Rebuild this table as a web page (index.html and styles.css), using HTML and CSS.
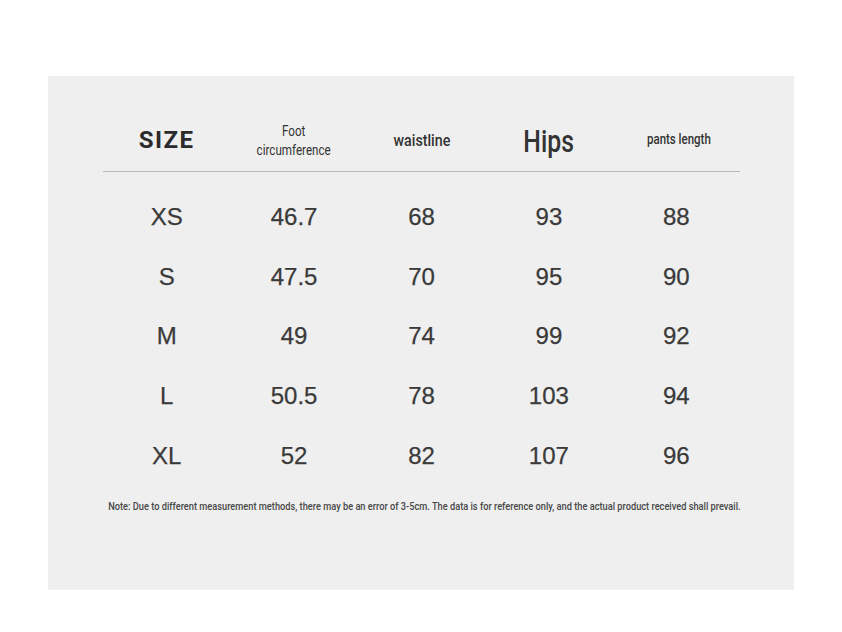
FILE: index.html
```html
<!DOCTYPE html>
<html>
<head>
<meta charset="utf-8">
<link rel="stylesheet" href="styles.css">
</head>
<body>
<div class="panel">
  <div class="table">
    <div class="row head">
      <div class="cell size">SIZE</div>
      <div class="cell"><span class="cond foot">Foot<br>circumference</span></div>
      <div class="cell"><span class="cond waist">waistline</span></div>
      <div class="cell"><span class="cond hips">Hips</span></div>
      <div class="cell"><span class="cond pants">pants length</span></div>
    </div>
    <div class="body">
      <div class="row data"><div class="cell">XS</div><div class="cell">46.7</div><div class="cell">68</div><div class="cell">93</div><div class="cell">88</div></div>
      <div class="row data"><div class="cell">S</div><div class="cell">47.5</div><div class="cell">70</div><div class="cell">95</div><div class="cell">90</div></div>
      <div class="row data"><div class="cell">M</div><div class="cell">49</div><div class="cell">74</div><div class="cell">99</div><div class="cell">92</div></div>
      <div class="row data"><div class="cell">L</div><div class="cell">50.5</div><div class="cell">78</div><div class="cell">103</div><div class="cell">94</div></div>
      <div class="row data"><div class="cell">XL</div><div class="cell">52</div><div class="cell">82</div><div class="cell">107</div><div class="cell">96</div></div>
    </div>
    <div class="note-wrap"><p class="note">Note: Due to different measurement methods, there may be an error of 3-5cm. The data is for reference only, and the actual product received shall prevail.</p></div>
  </div>
</div>
</body>
</html>
```
FILE: styles.css
```css
html, body {
  margin: 0;
  padding: 0;
  background: #ffffff;
}
.panel {
  margin: 76px 0 0 48px;
  width: 746px;
  height: 514px;
  box-sizing: border-box;
  padding: 33px 0 0 55px;
  background: #efefef;
}
.table {
  width: 637px;
}
.row {
  display: grid;
  grid-template-columns: repeat(5, 1fr);
  align-items: center;
  text-align: center;
}
.cell {
  display: flex;
  justify-content: center;
}
.head {
  height: 62px;
  border-bottom: 1px solid #b8b8b8;
  color: #333333;
}
.cond {
  display: inline-block;
  font-family: "Roboto", "Liberation Sans", sans-serif;
  white-space: nowrap;
  transform-origin: center center;
}
.size {
  font-family: "Roboto", "Liberation Sans", sans-serif;
  font-weight: 700;
  font-size: 24px;
  letter-spacing: 1.5px;
  color: #2b2b2b;
}
.foot {
  font-size: 14px;
  line-height: 19px;
  transform: scaleX(0.83);
  margin-top: 2px;
}
.waist {
  font-size: 16px;
  font-weight: 500;
  transform: scaleX(0.89);
}
.hips {
  font-size: 31px;
  font-weight: 500;
  transform: scaleX(0.8);
  margin-top: 2px;
}
.pants {
  font-size: 14px;
  font-weight: 500;
  transform: scaleX(0.82);
  margin-top: -2px;
  margin-left: 5px;
}
.body {
  padding-top: 15px;
}
.data {
  height: 59.75px;
  font-family: "Liberation Sans", "Roboto", sans-serif;
  font-size: 24px;
  color: #3a3a3a;
  -webkit-text-stroke: 0.25px #3a3a3a;
}
.note-wrap {
  display: flex;
  justify-content: center;
  margin-top: 13px;
  padding-left: 5px;
}
.note {
  flex: none;
  margin: 0;
  font-family: "Roboto", "Liberation Sans", sans-serif;
  font-size: 11px;
  font-weight: 500;
  line-height: 16px;
  color: #484848;
  white-space: nowrap;
  transform: scaleX(0.84);
  transform-origin: center center;
}
```
